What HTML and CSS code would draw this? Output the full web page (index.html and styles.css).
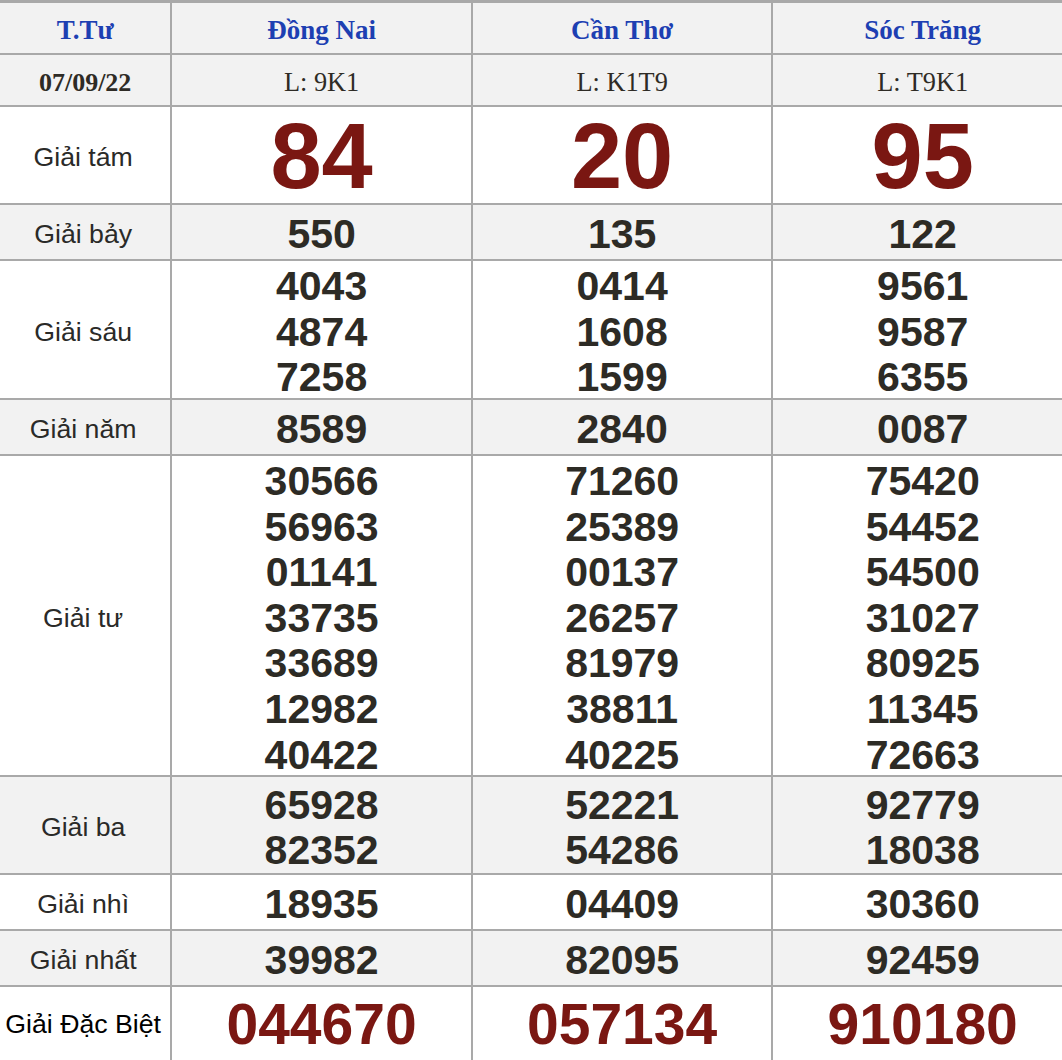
FILE: index.html
```html
<!DOCTYPE html>
<html lang="vi">
<head>
<meta charset="utf-8">
<title>Kết quả xổ số</title>
<link rel="stylesheet" href="styles.css">
</head>
<body>
<table class="kq">
  <colgroup>
    <col class="c-label">
    <col class="c-prov">
    <col class="c-prov">
    <col class="c-prov">
  </colgroup>
  <tr class="r-head alt">
    <th class="head">T.Tư</th>
    <th class="head">Đồng Nai</th>
    <th class="head">Cần Thơ</th>
    <th class="head">Sóc Trăng</th>
  </tr>
  <tr class="r-head alt">
    <td class="date">07/09/22</td>
    <td class="code">L: 9K1</td>
    <td class="code">L: K1T9</td>
    <td class="code">L: T9K1</td>
  </tr>
  <tr class="r-98">
    <td class="label">Giải tám</td>
    <td class="num big">84</td>
    <td class="num big">20</td>
    <td class="num big">95</td>
  </tr>
  <tr class="r-56 alt">
    <td class="label">Giải bảy</td>
    <td class="num">550</td>
    <td class="num">135</td>
    <td class="num">122</td>
  </tr>
  <tr class="r-139">
    <td class="label">Giải sáu</td>
    <td class="num multi"><div class="lines"><div>4043</div><div>4874</div><div>7258</div></div></td>
    <td class="num multi"><div class="lines"><div>0414</div><div>1608</div><div>1599</div></div></td>
    <td class="num multi"><div class="lines"><div>9561</div><div>9587</div><div>6355</div></div></td>
  </tr>
  <tr class="r-56 alt">
    <td class="label">Giải năm</td>
    <td class="num">8589</td>
    <td class="num">2840</td>
    <td class="num">0087</td>
  </tr>
  <tr class="r-321">
    <td class="label">Giải tư</td>
    <td class="num multi"><div class="lines"><div>30566</div><div>56963</div><div>01141</div><div>33735</div><div>33689</div><div>12982</div><div>40422</div></div></td>
    <td class="num multi"><div class="lines"><div>71260</div><div>25389</div><div>00137</div><div>26257</div><div>81979</div><div>38811</div><div>40225</div></div></td>
    <td class="num multi"><div class="lines"><div>75420</div><div>54452</div><div>54500</div><div>31027</div><div>80925</div><div>11345</div><div>72663</div></div></td>
  </tr>
  <tr class="r-98 alt">
    <td class="label">Giải ba</td>
    <td class="num multi"><div class="lines"><div>65928</div><div>82352</div></div></td>
    <td class="num multi"><div class="lines"><div>52221</div><div>54286</div></div></td>
    <td class="num multi"><div class="lines"><div>92779</div><div>18038</div></div></td>
  </tr>
  <tr class="r-56">
    <td class="label">Giải nhì</td>
    <td class="num">18935</td>
    <td class="num">04409</td>
    <td class="num">30360</td>
  </tr>
  <tr class="r-56 alt">
    <td class="label">Giải nhất</td>
    <td class="num">39982</td>
    <td class="num">82095</td>
    <td class="num">92459</td>
  </tr>
  <tr class="r-db">
    <td class="label label-db">Giải Đặc Biệt</td>
    <td class="num db">044670</td>
    <td class="num db">057134</td>
    <td class="num db">910180</td>
  </tr>
</table>
</body>
</html>
```
FILE: styles.css
```css
html, body {
  margin: 0;
  padding: 0;
  background: #ffffff;
  overflow: hidden;
}

.kq {
  border-collapse: separate;
  border-spacing: 0;
  table-layout: fixed;
  width: 1074px;
  border-top: 3px solid #a9a9a9;
}

.c-label { width: 172px; }
.c-prov { width: 300px; }

.kq th,
.kq td {
  box-sizing: border-box;
  padding: 5px 0 0 0;
  text-align: center;
  vertical-align: middle;
  border-right: 2px solid #a9a9a9;
  border-bottom: 2px solid #a9a9a9;
  background: #ffffff;
}

.kq tr.alt th,
.kq tr.alt td {
  background: #f2f2f2;
}

.r-head { height: 52px; }
.r-56 { height: 56px; }
.r-98 { height: 98px; }
.r-139 { height: 139px; }
.r-321 { height: 321px; }
.r-db { height: 76px; }

.head {
  font-family: "Liberation Serif", "Times New Roman", serif;
  font-weight: bold;
  font-size: 27px;
  color: #1d3fb2;
}

.kq th.head {
  padding-top: 5px;
}

.date {
  font-family: "Liberation Serif", "Times New Roman", serif;
  font-weight: bold;
  font-size: 26px;
  color: #2e2b25;
}

.code {
  font-family: "Liberation Serif", "Times New Roman", serif;
  font-weight: normal;
  font-size: 26.3px;
  color: #2e2b25;
}

.kq td.label {
  padding-right: 4px;
  font-family: "Liberation Sans", Arial, sans-serif;
  font-size: 26.7px;
  color: #2a2a28;
}

.kq td.label-db {
  padding-top: 0;
  color: #000000;
}

.num {
  font-family: "Liberation Sans", Arial, sans-serif;
  font-weight: bold;
  font-size: 41px;
  line-height: 45.6px;
  color: #2d2b25;
}

.kq td.num.multi {
  padding-top: 0;
}

.lines {
  padding-top: 3px;
  margin-bottom: -3px;
}

.kq td.num.big {
  padding-top: 2px;
  font-size: 92px;
  line-height: 92px;
  color: #7a1712;
}

.kq td.num.db {
  padding-top: 0;
  font-size: 57px;
  line-height: 60px;
  color: #7a1712;
}
```
